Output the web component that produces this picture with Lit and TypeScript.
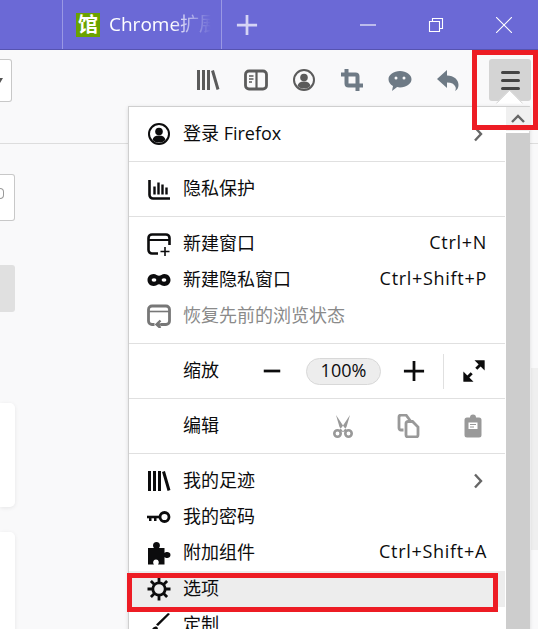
import { LitElement, html, css, svg } from 'lit'
import { customElement } from 'lit/decorators.js'

const icons = {
  library: svg`<path d="M2.500 2v20M7.500 2v20M12.500 2v20M16.500 2.500l5.500 19" fill="none" stroke="currentColor" stroke-width="3"/>`,
  sidebar: svg`<rect x="1.500" y="3" width="21" height="18" rx="3.500" fill="none" stroke="currentColor" stroke-width="2.800"/><path d="M12.500 4v16" stroke="currentColor" stroke-width="2.200"/><path d="M5 8h4.500M5 11h4.500M5 14h3" stroke="currentColor" stroke-width="1.400"/>`,
  account: svg`<circle cx="12" cy="12" r="10" fill="none" stroke="currentColor" stroke-width="2"/><circle cx="12" cy="9.500" r="3.800" fill="currentColor"/><path d="M5.500 18c.6-3.200 3-4.600 6.500-4.600s5.900 1.400 6.500 4.600c-1.700 1.600-3.900 2.600-6.500 2.600s-4.800-1-6.500-2.600z" fill="currentColor"/>`,
  crop: svg`<path d="M6.500 1v14.500a2 2 0 0 0 2 2H23M1 6.500h14.500a2 2 0 0 1 2 2V23" fill="none" stroke="currentColor" stroke-width="4"/>`,
  chat: svg`<path d="M12 3c6.300 0 11.500 3.700 11.500 8.200s-5.200 8.200-11.500 8.200c-1 0-2-.1-2.900-.3L4 23l1-5C2.200 16.500.5 13.900.5 11.200.5 6.700 5.700 3 12 3z" fill="currentColor"/><circle cx="8" cy="10" r="1.500" fill="#f9f9fa"/><circle cx="16" cy="10" r="1.500" fill="#f9f9fa"/>`,
  back: svg`<path d="M11 2v5.500c7 .3 11.500 4 11.500 9.500 0 2.800-1.300 5-3.500 6 1-1.500 1-2.800.4-4.200C18.300 16 15.500 14.500 11 14.500V20L1 11z" fill="currentColor"/>`,
  privacy: svg`<path d="M2.500 3v15a3.500 3.500 0 0 0 3.500 3.500h17" fill="none" stroke="currentColor" stroke-width="2.600"/><path d="M7.500 9.500v8M11.500 5.500v12M15.500 7.500v10M19.500 10.500v7" stroke="currentColor" stroke-width="2.400"/>`,
  newWindow: svg`<path d="M11 21.500H5a3.500 3.500 0 0 1-3.500-3.500V6A3.500 3.500 0 0 1 5 2.500h14A3.500 3.500 0 0 1 22.500 6v7" fill="none" stroke="currentColor" stroke-width="2.600"/><path d="M2 8h20" stroke="currentColor" stroke-width="2"/><path d="M18 15v9M13.500 19.500h9" stroke="currentColor" stroke-width="1.600"/>`,
  mask: svg`<path d="M6.500 6c2.500 0 4 1.800 5.500 1.800S15 6 17.500 6C21 6 23.500 8.800 23.500 12s-2.500 6-6 6c-2.500 0-4-1.800-5.500-1.800S9 18 6.500 18C3 18 .5 15.200.5 12S3 6 6.500 6z" fill="currentColor"/><ellipse cx="7" cy="12" rx="2.400" ry="1.700" fill="#fff"/><ellipse cx="17" cy="12" rx="2.400" ry="1.700" fill="#fff"/>`,
  restore: svg`<path d="M7.500 20.500H5A3.500 3.500 0 0 1 1.500 17V5.500A3.500 3.500 0 0 1 5 2h14a3.500 3.500 0 0 1 3.500 3.500V17a3.500 3.500 0 0 1-3.500 3.500h-5" fill="none" stroke="currentColor" stroke-width="2.800"/><path d="M2 7.500h20" stroke="currentColor" stroke-width="1.600"/><path d="M18 20.500h-8M13.500 16.500L9.500 20.500l4 3.500" fill="none" stroke="currentColor" stroke-width="2.400"/>`,
  key: svg`<circle cx="17.500" cy="12" r="4.500" fill="none" stroke="currentColor" stroke-width="2.800"/><path d="M0 10.700h13v2.600H0z" fill="currentColor"/><path d="M2 13h2.500v3H2zM7 13h2.500v3H7z" fill="currentColor"/>`,
  puzzle: svg`<path d="M1 7h6C5.500 5.500 5.500 1 9.500 1s4 4.500 2.500 6h5.500v5c1.500-1.500 6-1.500 6 2s-4.500 3.500-6 2v7.500H11c1.500-1.500 1-5-2-5s-3.500 3.500-2 5H1z" fill="currentColor"/>`,
  gear: svg`<circle cx="12" cy="12" r="6.200" fill="none" stroke="currentColor" stroke-width="2.800"/><path d="M12 .5v5M12 18.500v5M.5 12h5M18.500 12h5M3.900 3.900l3.500 3.500M16.600 16.600l3.500 3.500M3.900 20.100l3.500-3.500M16.600 7.400l3.500-3.500" stroke="currentColor" stroke-width="2.800"/>`,
  brush: svg`<path d="M23 1L11 13l-2-1.500L21 0zM9.500 13.500l1.500 1.500c-1 4-4.500 5.500-10 5.500 3-1.500 3.500-3.500 4.500-5 1-1.500 2.500-2 4-2z" fill="currentColor"/>`,
  cut: svg`<path d="M5 1l8 12 3 3.500-3.500 1.500L8.500 13zM19 1l-8 12-3 3.500 3.500 1.500 4-5z" fill="currentColor"/><circle cx="6.500" cy="19.500" r="3.200" fill="none" stroke="currentColor" stroke-width="2.600"/><circle cx="17.500" cy="19.500" r="3.200" fill="none" stroke="currentColor" stroke-width="2.600"/>`,
  copy: svg`<path d="M7.500 16H5a2 2 0 0 1-2-2V3a2 2 0 0 1 2-2h5l4.500 6" fill="none" stroke="currentColor" stroke-width="2.800"/><path d="M10 9.500a2 2 0 0 1 2-2h4.500l5.500 5.500v8a2 2 0 0 1-2 2h-8a2 2 0 0 1-2-2z" fill="#fff" stroke="currentColor" stroke-width="2.800"/>`,
  paste: svg`<path d="M6 3.500h3a3 3 0 0 1 6 0h3a2.500 2.500 0 0 1 2.500 2.500v15a2.500 2.500 0 0 1-2.500 2.500H6A2.500 2.500 0 0 1 3.500 21V6A2.500 2.500 0 0 1 6 3.500z" fill="currentColor"/><path d="M7.500 8.500h9v6.500h-9z" fill="#fff"/><path d="M9 10.500h6M9 13h4" stroke="currentColor" stroke-width="1.200"/>`,
  minus: svg`<path d="M3 12h18" stroke="currentColor" stroke-width="3"/>`,
  plus: svg`<path d="M12 1v22M1 12h22" stroke="currentColor" stroke-width="3"/>`,
  expand: svg`<path d="M14 1h9v9zM10 23H1v-9z" fill="currentColor" stroke="currentColor" stroke-width="1.200"/><path d="M20 4l-5.500 5.500M4 20l5.500-5.500" stroke="currentColor" stroke-width="3.200"/>`,
  chevron: svg`<path d="M2 5.500L8 12l-6 6.500" fill="none" stroke="currentColor" stroke-width="2.400"/>`,
}

type Item = { icon?: keyof typeof icons; label: string; keys?: string; arrow?: boolean; off?: boolean; on?: boolean }

const topA: Item[] = [{ icon: 'account', label: '登录 Firefox', arrow: true }]
const topB: Item[] = [{ icon: 'privacy', label: '隐私保护' }]
const windows: Item[] = [
  { icon: 'newWindow', label: '新建窗口', keys: 'Ctrl+N' },
  { icon: 'mask', label: '新建隐私窗口', keys: 'Ctrl+Shift+P' },
  { icon: 'restore', label: '恢复先前的浏览状态', off: true },
]
const tools: Item[] = [
  { icon: 'library', label: '我的足迹', arrow: true },
  { icon: 'key', label: '我的密码' },
  { icon: 'puzzle', label: '附加组件', keys: 'Ctrl+Shift+A' },
  { icon: 'gear', label: '选项', on: true },
  { icon: 'brush', label: '定制' },
]

const icon = (name: keyof typeof icons, cls = '') =>
  html`<svg class="icon ${cls}" viewBox="0 0 24 24">${icons[name]}</svg>`

@customElement('app-root')
export class AppRoot extends LitElement {
  static styles = css`
:host {
  display: block;
  position: relative;
  width: 538px;
  height: 629px;
  overflow: hidden;
  background: #f9f9fa;
  font-family: "Open Sans", "Noto Sans CJK SC", sans-serif;
  color: #0c0c0d;
}

.titlebar {
  display: flex;
  align-items: stretch;
  height: 49px;
  background: #6b69d6;
  border-bottom: 1px solid #5653b0;
  padding-left: 62px;
  color: #fff;
}

.tab {
  display: flex;
  align-items: center;
  gap: 9px;
  width: 160px;
  padding-left: 13px;
  box-sizing: border-box;
  border-left: 1px solid #9a98e4;
  border-right: 1px solid #9a98e4;
}

.favicon {
  flex: none;
  width: 24px;
  height: 24px;
  background: #6aa300;
  color: #fff;
  font-size: 20px;
  font-weight: 700;
  line-height: 24px;
  text-align: center;
}

.tab-title {
  flex: none;
  width: 102px;
  padding-bottom: 4px;
  overflow: hidden;
  white-space: nowrap;
  font-size: 19px;
  -webkit-mask-image: linear-gradient(to right, #000 60%, transparent 100%);
  mask-image: linear-gradient(to right, #000 60%, transparent 100%);
}

.new-tab {
  width: 50px;
  display: flex;
  align-items: center;
  justify-content: center;
  color: #d5d4f5;
}

.new-tab .icon {
  width: 22px;
  height: 22px;
}

.win {
  margin-left: auto;
  display: flex;
  align-items: center;
  gap: 52px;
  padding-right: 26px;
}

.win svg {
  width: 16px;
  height: 16px;
  fill: none;
  stroke: #fff;
  stroke-width: 1.100;
}

.toolbar {
  display: flex;
  align-items: flex-start;
  height: 94px;
  box-sizing: border-box;
  padding: 9px 7px 0 0;
  border-bottom: 1px solid #ddd;
  background: #f9f9fa;
}

.select {
  width: 12px;
  height: 43px;
  box-sizing: border-box;
  background: #fff;
  border: 1px solid #c8c8c8;
  border-left: 0;
  border-radius: 0 3px 3px 0;
  display: flex;
  align-items: center;
}

.select i {
  border-top: 5px solid #555;
  border-right: 3px solid transparent;
  width: 0;
  height: 0;
}

.tools {
  margin-left: auto;
  display: flex;
  gap: 6px;
  margin-right: 20px;
}

.tool {
  width: 42px;
  height: 42px;
  display: flex;
  align-items: center;
  justify-content: center;
  color: #5b5b5b;
}

.tool .icon {
  width: 24px;
  height: 24px;
}

.tool.tint {
  color: #6e7a85;
}

.burger {
  flex: none;
  width: 42px;
  height: 42px;
  border-radius: 3px;
  background: #d4d4d4;
  display: flex;
  flex-direction: column;
  align-items: center;
  justify-content: center;
  gap: 5px;
}

.burger i {
  width: 19px;
  height: 3px;
  border-radius: 2px;
  background: #444;
}

.page {
  display: flex;
  justify-content: space-between;
}

.left {
  width: 15px;
  padding-top: 30px;
  display: flex;
  flex-direction: column;
}

.field {
  height: 47px;
  box-sizing: border-box;
  background: #fff;
  border: 1px solid #c8c8c8;
  border-left: 0;
  border-radius: 0 3px 3px 0;
  display: flex;
  align-items: center;
}

.field i {
  width: 3px;
  height: 9px;
  border: 1px solid #999;
  border-left: 0;
  border-radius: 0 5px 5px 0;
  margin-top: -8px;
}

.grey {
  height: 47px;
  margin-top: 44px;
  background: #e0e0e0;
  border-radius: 0 3px 3px 0;
}

.card {
  height: 104px;
  background: #fff;
  border-radius: 0 5px 5px 0;
  box-shadow: 0 1px 4px rgba(0, 0, 0, 0.08);
}

.card.one {
  margin-top: 91px;
}

.card.two {
  margin-top: 25px;
}

.rail {
  width: 7px;
  height: 182px;
  margin-top: 224px;
  background: #efefef;
}

/* the dropped menu lies over the page */
.panel {
  position: absolute;
  left: 128px;
  top: 106px;
  width: 402px;
  height: 540px;
  box-sizing: border-box;
  display: flex;
  background: #fff;
  border: 1px solid #cfcfcf;
  border-right-color: #d8d8d8;
  box-shadow: 0 1px 4px rgba(0, 0, 0, 0.12);
}

.arrow {
  position: absolute;
  left: 370px;
  top: -14px;
  width: 20px;
  height: 20px;
  background: #fff;
  border-left: 1px solid #cfcfcf;
  border-top: 1px solid #cfcfcf;
  transform: rotate(45deg) scale(0.95);
  clip-path: polygon(0 0, 100% 0, 0 100%);
}

.menu {
  width: 376px;
  flex: none;
  display: flex;
  flex-direction: column;
}

.section {
  padding: 9px 0;
  border-bottom: 1px solid #e0e0e0;
}

.section:last-child {
  border-bottom: 0;
  padding-bottom: 0;
}

.row {
  display: flex;
  align-items: center;
  height: 36px;
  padding: 0 18px;
  font-size: 18px;
  white-space: nowrap;
}

.row span {
  padding-bottom: 4px;
}

.row.on {
  background: #ededed;
}

.row.off {
  color: #8a8a8a;
}

.row .icon {
  flex: none;
  width: 24px;
  height: 24px;
  margin-right: 12px;
}

.row.off .icon {
  color: #777;
}

.row .keys {
  margin-left: auto;
  letter-spacing: 0.7px;
}

.row .chevron {
  margin: 0 -10px 0 auto;
  color: #666;
}

.wide {
  display: flex;
  align-items: center;
  height: 55px;
  box-sizing: border-box;
  padding: 0 0 0 54px;
  font-size: 18px;
}

.wide .name {
  width: 78px;
  padding-bottom: 4px;
}

.zoom .icon {
  width: 22px;
  height: 22px;
  flex: none;
}

.pill {
  box-sizing: border-box;
  width: 75px;
  height: 27px;
  margin: 0 22px 0 23px;
  border: 1px solid #d8d8d8;
  border-radius: 14px;
  background: #ededed;
  font-size: 18px;
  line-height: 23px;
  text-align: center;
}

.rule {
  width: 1px;
  height: 35px;
  margin: 0 19px 0 18px;
  background: #e0e0e0;
}

.edit .name {
  color: #0c0c0d;
}

.edit-tools {
  display: flex;
  gap: 41px;
  margin-left: 70px;
  color: #999;
}

.edit-tools .icon {
  width: 24px;
  height: 24px;
}

.scroll {
  margin-left: 1px;
  width: 24px;
  flex: none;
  display: flex;
  flex-direction: column;
  gap: 2px;
}

.scroll-up {
  height: 24px;
  flex: none;
  background: #f0f0f0;
  color: #666;
  display: flex;
  justify-content: center;
  align-items: center;
}

.scroll-up svg {
  width: 14px;
  height: 10px;
  fill: none;
  stroke: currentColor;
  stroke-width: 2.400;
}

.thumb {
  flex: 1;
  background: #cdcdcd;
}

/* red annotation frames drawn over the screenshot */
.mark {
  position: absolute;
  box-sizing: border-box;
  border: 5px solid #ed1c24;
}

.mark.burger-mark {
  left: 472px;
  top: 50px;
  width: 66px;
  height: 80px;
}

.mark.option-mark {
  left: 127px;
  top: 573px;
  width: 371px;
  height: 39px;
}
`

  renderRow (item: Item) {
    return html`<div class="row ${item.on ? 'on' : ''} ${item.off ? 'off' : ''}">
      ${item.icon ? icon(item.icon) : ''}
      <span>${item.label}</span>
      ${item.keys ? html`<span class="keys">${item.keys}</span>` : ''}
      ${item.arrow ? icon('chevron', 'chevron') : ''}
    </div>`
  }

  render () {
    return html`
<div class="titlebar">
  <div class="tab">
    <span class="favicon">馆</span>
    <span class="tab-title">Chrome扩展程序</span>
  </div>
  <div class="new-tab">${icon('plus')}</div>
  <div class="win">
    <svg viewBox="0 0 16 16"><path d="M0 8h16"/></svg>
    <svg viewBox="0 0 16 16"><path d="M1.500 4.500h10v10h-10zM4.500 4.500v-3h10v10h-3"/></svg>
    <svg viewBox="0 0 16 16"><path d="M0 0l16 16M16 0L0 16"/></svg>
  </div>
</div>
<div class="toolbar">
  <div class="select"><i></i></div>
  <div class="tools">
    <div class="tool">${icon('library')}</div>
    <div class="tool">${icon('sidebar')}</div>
    <div class="tool">${icon('account')}</div>
    <div class="tool tint">${icon('crop')}</div>
    <div class="tool tint">${icon('chat')}</div>
    <div class="tool tint">${icon('back')}</div>
  </div>
  <div class="burger"><i></i><i></i><i></i></div>
</div>
<div class="page">
  <div class="left">
    <div class="field"><i></i></div>
    <div class="grey"></div>
    <div class="card one"></div>
    <div class="card two"></div>
  </div>
  <div class="rail"></div>
</div>
<div class="panel">
  <div class="arrow"></div>
  <div class="menu">
    <div class="section">${topA.map((i) => this.renderRow(i))}</div>
    <div class="section">${topB.map((i) => this.renderRow(i))}</div>
    <div class="section">${windows.map((i) => this.renderRow(i))}</div>
    <div class="wide zoom section">
      <span class="name">缩放</span>
      ${icon('minus')}
      <span class="pill">100%</span>
      ${icon('plus')}
      <span class="rule"></span>
      ${icon('expand')}
    </div>
    <div class="wide edit section">
      <span class="name">编辑</span>
      <div class="edit-tools">${icon('cut')}${icon('copy')}${icon('paste')}</div>
    </div>
    <div class="section">${tools.map((i) => this.renderRow(i))}</div>
  </div>
  <div class="scroll">
    <div class="scroll-up"><svg viewBox="0 0 14 10"><path d="M1 8l6-6 6 6"/></svg></div>
    <div class="thumb"></div>
  </div>
</div>
<div class="mark burger-mark"></div>
<div class="mark option-mark"></div>
`
  }
}
